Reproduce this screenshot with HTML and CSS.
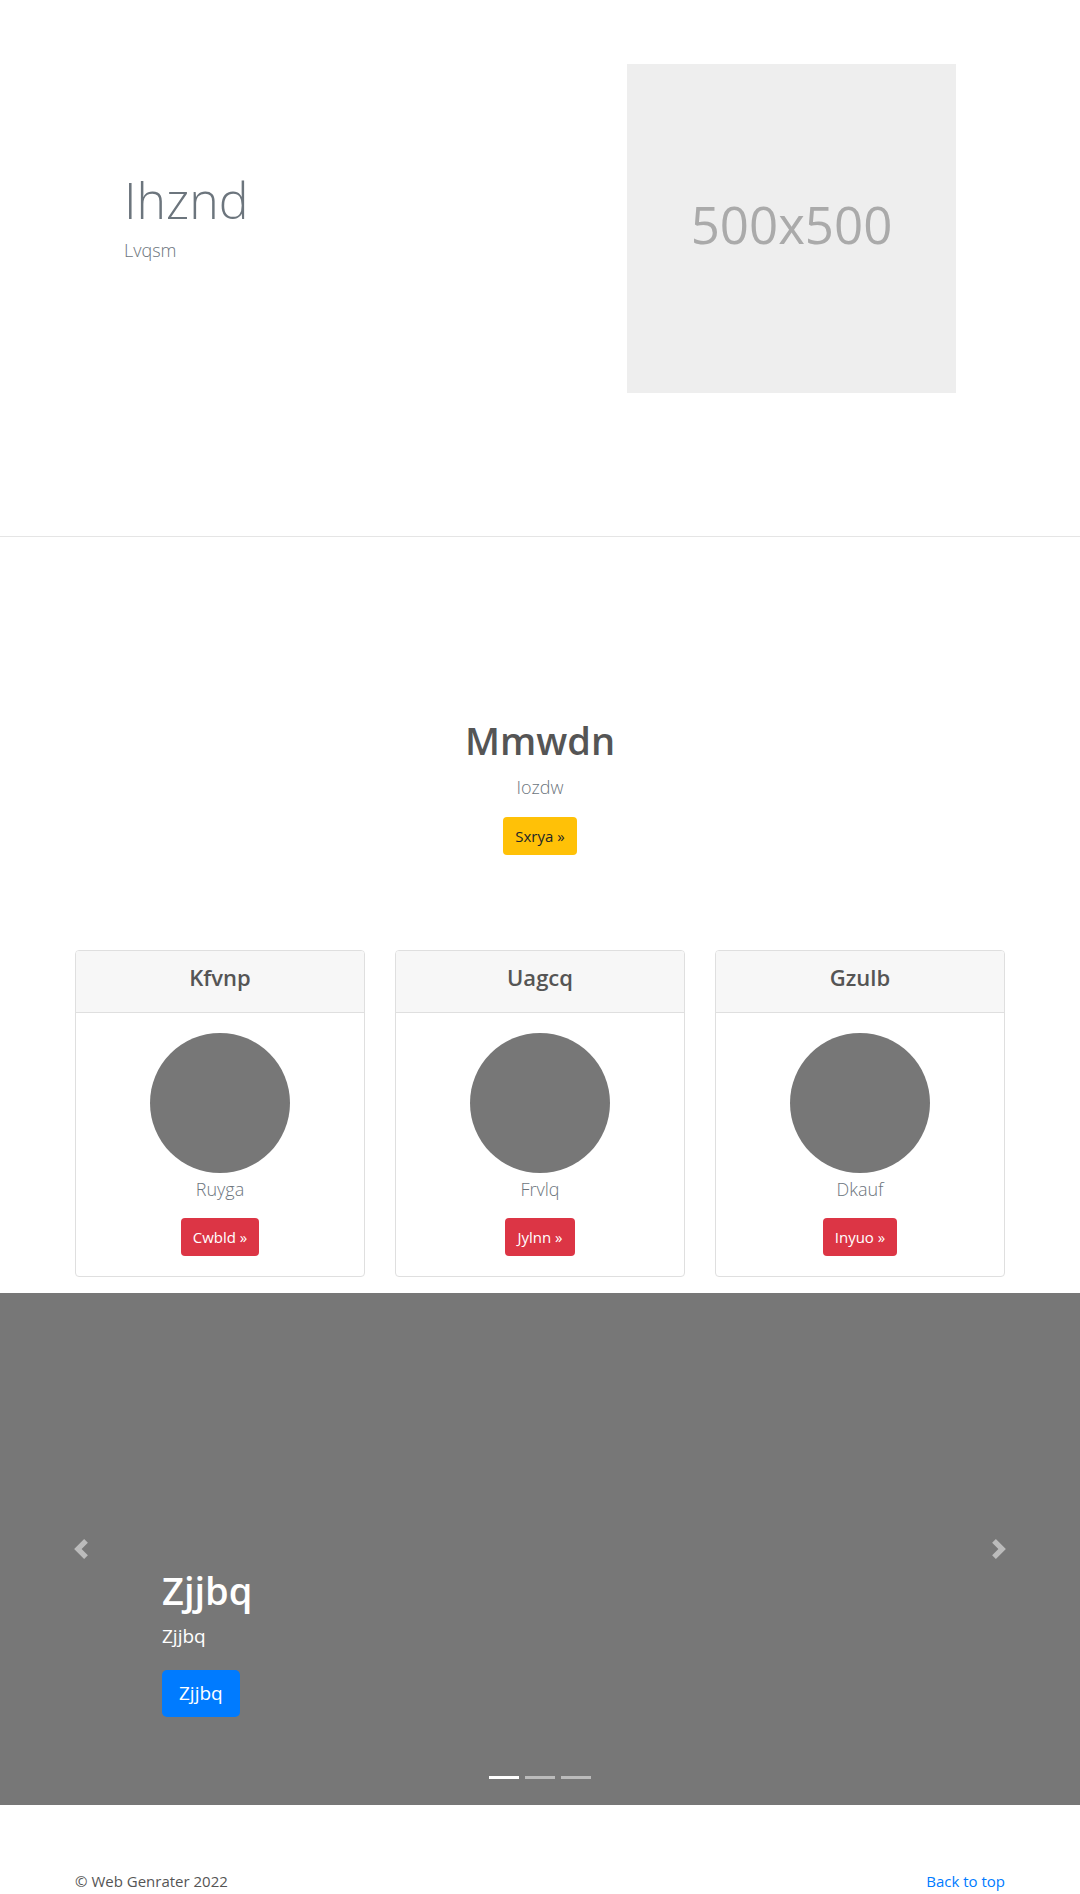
FILE: index.html
```html
<!DOCTYPE html>
<html lang="en">
<head>
<meta charset="utf-8">
<title>Ihznd</title>
<link rel="stylesheet" href="styles.css">
</head>
<body>
<section class="hero">
  <div class="hero-text">
    <h1 class="hero-title">Ihznd</h1>
    <p class="hero-lead">Lvqsm</p>
  </div>
  <div class="placeholder">500x500</div>
</section>
<hr class="divider">
<section class="intro">
  <h1 class="intro-title">Mmwdn</h1>
  <p class="intro-lead">Iozdw</p>
  <a class="btn btn-warning" href="#">Sxrya &raquo;</a>
</section>
<section class="cards">
  <div class="card">
    <div class="card-header"><h4 class="card-title">Kfvnp</h4></div>
    <div class="card-body">
      <div class="avatar"></div>
      <p class="card-lead">Ruyga</p>
      <a class="btn btn-danger" href="#">Cwbld &raquo;</a>
    </div>
  </div>
  <div class="card">
    <div class="card-header"><h4 class="card-title">Uagcq</h4></div>
    <div class="card-body">
      <div class="avatar"></div>
      <p class="card-lead">Frvlq</p>
      <a class="btn btn-danger" href="#">Jylnn &raquo;</a>
    </div>
  </div>
  <div class="card">
    <div class="card-header"><h4 class="card-title">Gzulb</h4></div>
    <div class="card-body">
      <div class="avatar"></div>
      <p class="card-lead">Dkauf</p>
      <a class="btn btn-danger" href="#">Inyuo &raquo;</a>
    </div>
  </div>
</section>
<section class="carousel">
  <a class="control control-prev" href="#">
    <svg class="control-icon" viewBox="0 0 8 8" width="20" height="20"><path d="M5.25 0l-4 4 4 4 1.5-1.5L4.25 4l2.5-2.5L5.25 0z"/></svg>
  </a>
  <a class="control control-next" href="#">
    <svg class="control-icon" viewBox="0 0 8 8" width="20" height="20"><path d="M2.75 0l-1.5 1.5L3.75 4l-2.5 2.5L2.75 8l4-4-4-4z"/></svg>
  </a>
  <div class="caption">
    <h1 class="caption-title">Zjjbq</h1>
    <p class="caption-text">Zjjbq</p>
    <a class="btn btn-primary btn-lg" href="#">Zjjbq</a>
  </div>
  <ol class="indicators">
    <li class="indicator active"></li>
    <li class="indicator"></li>
    <li class="indicator"></li>
  </ol>
</section>
<footer class="footer">
  <p class="copy">&copy; Web Genrater 2022</p>
  <a class="back" href="#">Back to top</a>
</footer>
</body>
</html>
```
FILE: styles.css
```css
* { box-sizing: border-box; }
html, body { margin: 0; padding: 0; }
body {
  font-family: "Open Sans", "Noto Sans", sans-serif;
  font-size: 16px;
  line-height: 1.5;
  color: #555;
  background: #fff;
  height: 1894px;
  overflow: hidden;
}
h1, h4, p { margin: 0; }

.hero {
  display: flex;
  align-items: flex-start;
  padding: 64px 0 143px 124px;
}
.hero-text {
  width: 503px;
  padding-top: 109px;
}
.hero-title {
  font-size: 50px;
  font-weight: 300;
  line-height: 1.1;
  color: #6c757d;
}
.hero-lead {
  font-size: 18px;
  font-weight: 300;
  line-height: 1.5;
  color: #6c757d;
  margin-top: 9px;
}
.placeholder {
  width: 329px;
  height: 329px;
  padding-bottom: 8px;
  background: #eee;
  color: #aaa;
  font-size: 51px;
  display: flex;
  align-items: center;
  justify-content: center;
}

.divider {
  margin: 0;
  border: 0;
  border-top: 1px solid #e5e5e5;
}

.intro {
  text-align: center;
  padding-top: 181px;
}
.intro-title {
  font-size: 38px;
  font-weight: 600;
  line-height: 1.2;
  color: #555;
  margin-bottom: 10px;
}
.intro-lead {
  font-size: 18px;
  font-weight: 300;
  line-height: 1.5;
  color: #6c757d;
  margin-bottom: 16px;
}

.btn {
  display: inline-block;
  font-size: 15px;
  line-height: 24px;
  padding: 7px 12px;
  border-radius: 4px;
  text-decoration: none;
  vertical-align: top;
}
.btn-warning { background: #ffc107; color: #212529; }
.btn-danger { background: #dc3545; color: #fff; }
.btn-primary { background: #007bff; color: #fff; }
.btn-lg {
  font-size: 19px;
  line-height: 29px;
  padding: 9px 17px;
  border-radius: 5px;
}

.cards {
  display: grid;
  grid-template-columns: repeat(3, 1fr);
  gap: 30px;
  width: 930px;
  margin: 95px auto 16px;
}
.card {
  border: 1px solid #dfdfdf;
  border-radius: 4px;
  text-align: center;
  overflow: hidden;
}
.card-header {
  background: #f7f7f7;
  border-bottom: 1px solid #dfdfdf;
  padding: 12px 20px;
}
.card-title {
  font-size: 22px;
  font-weight: 600;
  line-height: 28.8px;
  margin-bottom: 9px;
  color: #555;
}
.card-body {
  padding: 20px;
  display: flex;
  flex-direction: column;
  align-items: center;
}
.avatar {
  width: 140px;
  height: 140px;
  border-radius: 50%;
  background: #777;
}
.card-lead {
  font-size: 18px;
  font-weight: 300;
  line-height: 32px;
  color: #6c757d;
  margin-bottom: 13px;
}

.carousel {
  position: relative;
  height: 512px;
  background: #777;
}
.control {
  position: absolute;
  top: 0;
  bottom: 0;
  width: 15%;
  display: flex;
  align-items: center;
  justify-content: center;
}
.control-prev { left: 0; }
.control-next { right: 0; }
.control-icon { fill: #fff; opacity: 0.5; }
.caption {
  position: absolute;
  left: 15%;
  right: 15%;
  bottom: 88px;
  color: #fff;
}
.caption-title {
  font-size: 38px;
  font-weight: 600;
  line-height: 48px;
  margin-bottom: 8px;
}
.caption-text {
  font-size: 19px;
  line-height: 28px;
  margin-bottom: 20px;
}
.indicators {
  position: absolute;
  left: 0;
  right: 0;
  bottom: 26px;
  margin: 0;
  padding: 0;
  list-style: none;
  display: flex;
  justify-content: center;
  gap: 6px;
}
.indicator {
  width: 30px;
  height: 3px;
  background: rgba(255, 255, 255, 0.5);
}
.indicator.active { background: #fff; }

.footer {
  width: 930px;
  margin: 64px auto 0;
  display: flex;
  justify-content: space-between;
  font-size: 15px;
  line-height: 24px;
}
.copy { color: #555; }
.back { color: #007bff; text-decoration: none; }
```
